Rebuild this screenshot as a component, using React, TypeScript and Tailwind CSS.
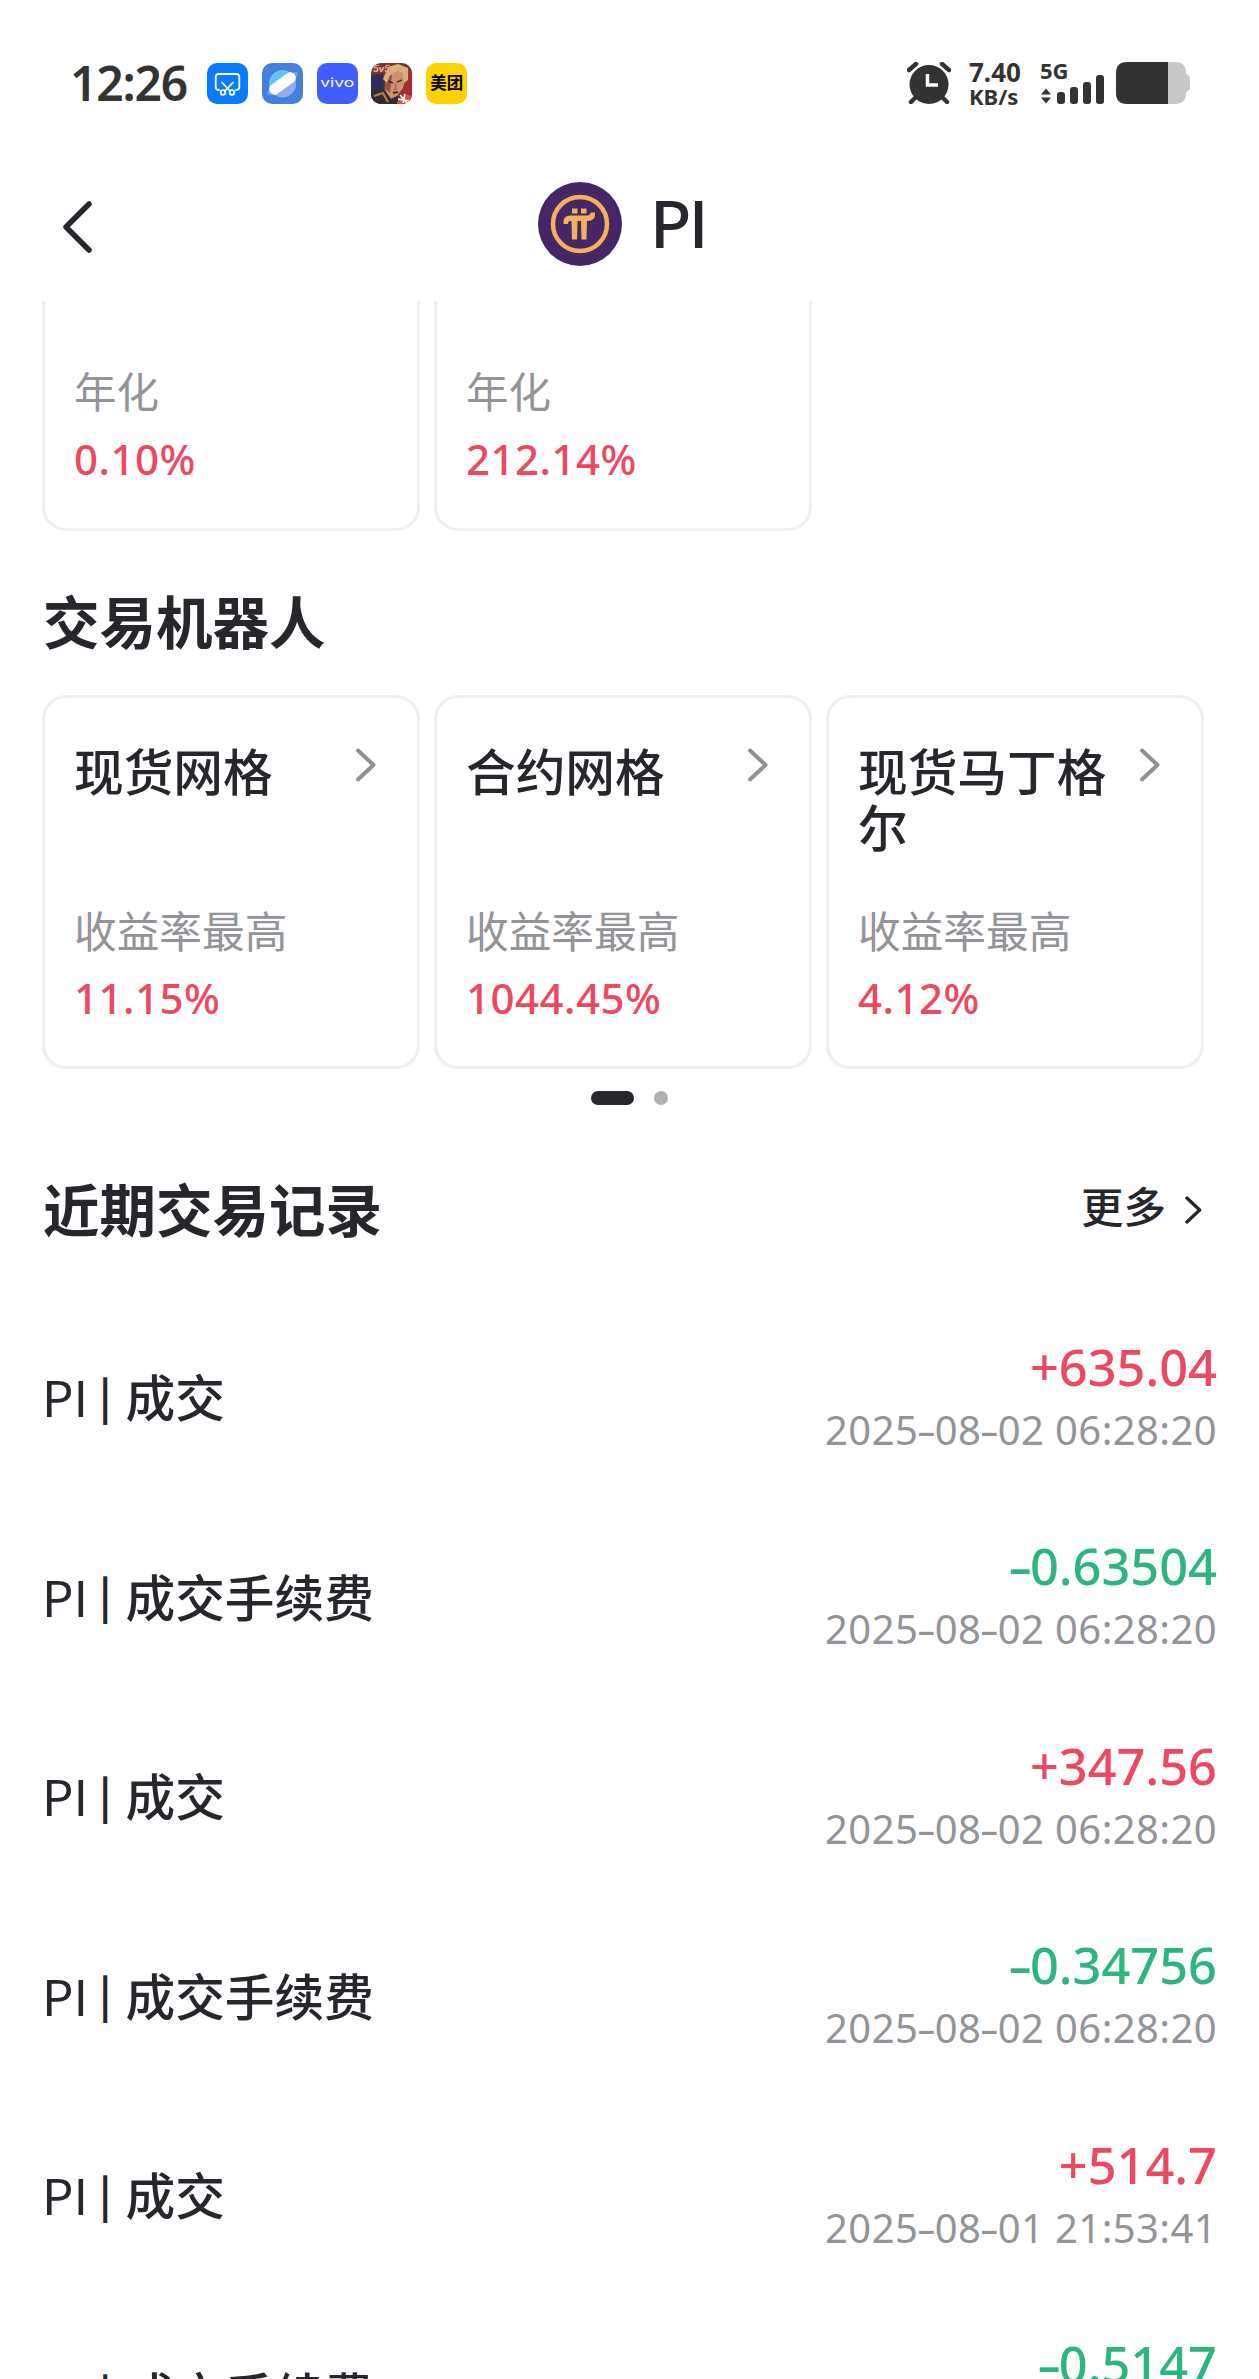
import React from "react";

interface BotCard {
  title: string;
  rate: string;
}

interface TradeRecord {
  type: string;
  amount: string;
  time: string;
}

const earnRates: string[] = ["0.10%", "212.14%"];

const bots: BotCard[] = [
  { title: "现货网格", rate: "11.15%" },
  { title: "合约网格", rate: "1044.45%" },
  { title: "现货马丁格尔", rate: "4.12%" },
];

const records: TradeRecord[] = [
  { type: "成交", amount: "+635.04", time: "2025-08-02 06:28:20" },
  { type: "成交手续费", amount: "-0.63504", time: "2025-08-02 06:28:20" },
  { type: "成交", amount: "+347.56", time: "2025-08-02 06:28:20" },
  { type: "成交手续费", amount: "-0.34756", time: "2025-08-02 06:28:20" },
  { type: "成交", amount: "+514.7", time: "2025-08-01 21:53:41" },
  { type: "成交手续费", amount: "-0.5147", time: "2025-08-01 21:53:41" },
];

const AppIcons: React.FC = () => (
  <div className="flex gap-[13.8px]">
    {/* screenshot */}
    <svg className="size-[41px] rounded-[10px] bg-[#0a7bff]" viewBox="0 0 41 41" fill="none" stroke="#fff" strokeWidth="1.8" strokeLinecap="round">
      <path d="M12 27C9.500 27 8.700 25.500 8.700 24V14C8.700 12 9.700 11 11.700 11H29.300C31.300 11 32.300 12 32.300 14V24C32.300 25.500 31.500 27 29 27" />
      <path d="M15 19.500L23 28M26 19.500L18 28" />
      <circle cx="16" cy="29.500" r="2.300" />
      <circle cx="25" cy="29.500" r="2.300" />
    </svg>
    {/* browser */}
    <svg className="size-[41px] rounded-[10px] bg-[#4480dc]" viewBox="0 0 41 41">
      <circle cx="20.500" cy="20.500" r="13.500" fill="#62c3f4" />
      <path d="M9 28A13.500 13.500 0 0 0 34 20.500L30 16Z" fill="#91aeec" />
      <ellipse cx="20.500" cy="20.500" rx="18.500" ry="4.500" fill="#79a3e8" transform="rotate(-36 20.500 20.500)" />
      <rect x="5.500" y="15" width="30" height="11" rx="5" fill="#fff" transform="rotate(-36 20.500 20.500)" />
    </svg>
    <div className="flex size-[41px] items-center justify-center rounded-[10px] bg-[#415cff]">
      <span className="scale-x-[1.4] font-['Inter'] text-[12.5px] leading-none text-white">vivo</span>
    </div>
    {/* game portrait */}
    <svg className="size-[41px] rounded-[10px] bg-[#6b3a31]" viewBox="0 0 41 41">
      <path d="M0 13L12 10L14 41H0Z" fill="#2d3159" />
      <path d="M32 8L41 6V41H29Z" fill="#a32d35" />
      <path d="M14 12L21 5L31 4L35 13L32 25L26 33L20 36L14 27Z" fill="#cf9270" />
      <path d="M14 14L21 12L19 30L14 26Z" fill="#93553f" />
      <path d="M12 16L17 4L27 1L37 5L37 17L33 20L32 11L27 7L19 12L16 20Z" fill="#d9b077" />
      <path d="M17 18L22 20M26 19L31 17M22 30L27 29" stroke="#512926" strokeWidth="1.800" />
      <path d="M24 20L25 26L22 27" stroke="#a45e49" strokeWidth="1.300" fill="none" />
      <path d="M0 28L13 27L20 36L27 33L28 41H0Z" fill="#342b2d" />
      <path d="M3 33L12 30L17 39" stroke="#b98249" strokeWidth="2" fill="none" />
      <path d="M26 39L33 31L41 33V41H26Z" fill="#da5143" />
      <path d="M27 36L38 38M34 31L32 40M29 32L36 40" stroke="#fff" strokeWidth="1.500" />
      <text x="2" y="9" fill="#fff" stroke="#d2432f" strokeWidth=".5" className="font-['Inter'] text-[9px] font-bold italic">5v5</text>
    </svg>
    <div className="flex size-[41px] items-center justify-center rounded-[10px] bg-[#ffd100]">
      <span className="pb-[1px] font-['Noto_Sans_CJK_SC',sans-serif] text-[16.5px] leading-none font-bold text-black">美团</span>
    </div>
  </div>
);

const StatusBar: React.FC = () => (
  <header className="flex h-[104px] items-end justify-between pr-[69px] pl-[70px] text-[#333]">
    <div className="flex h-[42px] items-center">
      <span className="w-[137px] text-[48px] leading-none font-semibold tracking-[-1.2px]">12:26</span>
      <AppIcons />
    </div>
    <div className="flex h-[42px]">
      <svg className="h-[42px] w-[44px]" viewBox="0 0 44 42" fill="#333">
        <circle cx="22" cy="22.500" r="19.500" />
        <path d="M2 8L9 2M42 8L35 2M8 36L4 40M36 36L40 40" stroke="#333" strokeWidth="4.500" strokeLinecap="round" />
        <path d="M20.500 12V23H31" stroke="#fff" strokeWidth="3.500" fill="none" />
      </svg>
      <div className="ml-[18px] flex w-[53px] flex-col font-bold">
        <span className="text-[26px] leading-[20px]">7.40</span>
        <span className="mt-[3px] text-[22px] leading-[22px]">KB/s</span>
      </div>
      <div className="ml-[18px] w-[64px]">
        <div className="h-[13px] text-[22px] leading-[17px] font-bold">5G</div>
        <svg className="h-[29px] w-[64px]" viewBox="0 0 64 29" fill="#333">
          <path d="M1 19.500L6 13.500L11 19.500ZM1 22.500L6 28.500L11 22.500Z" />
          <rect x="17" y="17" width="8" height="12" rx="3" />
          <rect x="30" y="12" width="8" height="17" rx="3" />
          <rect x="43" y="7" width="8" height="22" rx="3" />
          <rect x="56" y="0" width="8" height="29" rx="3" />
        </svg>
      </div>
      <svg className="ml-[12px] h-[42px] w-[74px]" viewBox="0 0 74 42">
        <path d="M52 0H59Q70 0 70 11V12Q74 13 74 17V25Q74 29 70 30V31Q70 42 59 42H52Z" fill="#c8c8c8" />
        <path d="M11 0H52V42H11Q0 42 0 31V11Q0 0 11 0Z" fill="#333" />
      </svg>
    </div>
  </header>
);

const PiLogo: React.FC = () => (
  <svg className="size-[84px]" viewBox="0 0 84 84">
    <circle cx="42" cy="42" r="42" fill="#452767" />
    <circle cx="42" cy="42" r="27" fill="none" stroke="#f2b15a" strokeWidth="4.500" />
    <g fill="#f2b15a">
      <rect x="34" y="26.500" width="5.500" height="5" />
      <rect x="43" y="26.500" width="5.500" height="5" />
      <path d="M25.500 42V40Q25.500 33.500 32 33.500H49Q52.500 33.500 52.500 30.500H57V32.500Q57 39 50 39H49L48.500 57.500H43.500L43 39H39.500L39 57.500H34L33.500 39H32Q30 39 30 42Z" />
    </g>
  </svg>
);

const Chevron: React.FC<{ className?: string }> = ({ className }) => (
  <svg className={className} viewBox="0 0 20 34" fill="none" stroke="currentColor" strokeWidth="4" strokeLinecap="round" strokeLinejoin="round">
    <path d="M2 2.500L17.500 17L2 31.500" />
  </svg>
);

// Figures are set with wider dashes than the font's own hyphen
const Figure: React.FC<{ value: string }> = ({ value }) => (
  <>
    {value.split("").map((char, i) =>
      char === "-" ? (
        <span key={i} className="mx-[0.04em] inline-block scale-x-[1.5]">
          -
        </span>
      ) : (
        char
      )
    )}
  </>
);

const App: React.FC = () => {
  return (
    <div className="h-[2379px] w-[1259px] overflow-hidden bg-white font-['Noto_Sans','Noto_Sans_CJK_SC',sans-serif] text-[#25272d]">
      <StatusBar />

      {/* Title bar */}
      <nav className="flex h-[197px] items-center pt-[43px] pl-[61px]">
        <svg className="mt-[6px] h-[52px] w-[32px]" viewBox="0 0 32 52" fill="none" stroke="#25272d" strokeWidth="5.500" strokeLinecap="round" strokeLinejoin="round">
          <path d="M28 3L5 26L28 49" />
        </svg>
        <div className="ml-[445px] flex items-center gap-[28px]">
          <PiLogo />
          <span className="pb-[8px] font-['Noto_Sans_CJK_SC',sans-serif] text-[63.5px] leading-[76px] font-medium tracking-[-2.5px]">PI</span>
        </div>
      </nav>

      <main className="pr-[42px] pl-[42px]">
        {/* Earn cards, scrolled under the title bar */}
        <div className="flex gap-[14px]">
          {earnRates.map((rate) => (
            <div key={rate} className="h-[230px] w-[378px] rounded-b-[24px] border-[3px] border-t-0 border-[#efefef] pt-[59px] pl-[29px]">
              <div className="font-['Noto_Sans_CJK_SC',sans-serif] text-[42.5px] leading-[60px] text-[#929498]">年化</div>
              <div className="mt-[9px] text-[42px] leading-[60px] font-medium tracking-[0.5px] text-[#ee4860]">{rate}</div>
            </div>
          ))}
        </div>

        {/* Trading bots */}
        <h2 className="mt-[46px] h-[118px] pl-[1px] font-['Noto_Sans_CJK_SC',sans-serif] text-[56.5px] leading-[84px] font-bold">交易机器人</h2>
        <div className="flex gap-[14px]">
          {bots.map((bot) => (
            <div key={bot.title} className="h-[374px] w-[378px] rounded-[24px] border-[3px] border-[#efefef] pt-[43px] pl-[29px]">
              <div className="flex h-[158px]">
                <div className="w-[260px] font-['Noto_Sans_CJK_SC',sans-serif] text-[49.7px] leading-[56px] font-medium">{bot.title}</div>
                <Chevron className="mt-[7px] ml-[22px] h-[34px] w-[20px] text-[#8f9195]" />
              </div>
              <div className="font-['Noto_Sans_CJK_SC',sans-serif] text-[42.7px] leading-[60px] text-[#929498]">收益率最高</div>
              <div className="mt-[9px] text-[42px] leading-[60px] font-medium tracking-[0.5px] text-[#ee4860]">{bot.rate}</div>
            </div>
          ))}
        </div>
        <div className="mt-[22px] flex items-center gap-[20px] pl-[549px]">
          <span className="h-[14px] w-[43px] rounded-full bg-[#25272d]" />
          <span className="size-[14px] rounded-full bg-[#aeb0b2]" />
        </div>

        {/* Recent records */}
        <div className="mt-[60px] flex h-[84px] items-center justify-between pl-[1px] font-['Noto_Sans_CJK_SC',sans-serif]">
          <h2 className="text-[56.5px] leading-[84px] font-bold">近期交易记录</h2>
          <div className="mr-[15px] flex items-center">
            <span className="pb-[5px] text-[42.5px] leading-[56px] font-medium">更多</span>
            <Chevron className="mt-[6px] ml-[19px] h-[28px] w-[17px]" />
          </div>
        </div>
        <ul className="mt-[48px]">
          {records.map((record, i) => (
            <li key={i} className="flex h-[199.5px] items-center justify-between">
              <div className="flex items-center pb-[3px] font-['Noto_Sans_CJK_SC',sans-serif] text-[49.7px] leading-[74px] font-medium">
                <span className="font-normal">PI</span>
                <span className="mr-[14px] ml-[11px] pb-[1px] text-[42px] leading-[60px] font-bold">|</span>
                <span>{record.type}</span>
              </div>
              <div className="text-right">
                <div className={`text-[50.5px] leading-[66px] font-medium ${record.amount.startsWith("+") ? "text-[#ee4860]" : "text-[#2bb57f]"}`}>
                  <Figure value={record.amount} />
                </div>
                <div className="text-[40px] leading-[60px] tracking-[0.4px] text-[#929498]">
                  <Figure value={record.time} />
                </div>
              </div>
            </li>
          ))}
        </ul>
      </main>
    </div>
  );
};

export default App;
